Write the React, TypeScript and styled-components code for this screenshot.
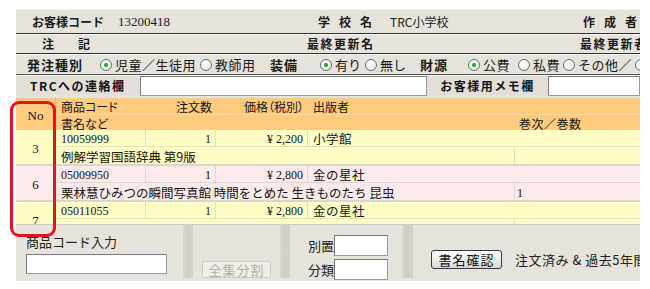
import React from "react";
import styled, { createGlobalStyle } from "styled-components";

const GlobalStyle = createGlobalStyle`
  html, body { margin: 0; padding: 0; background: #ffffff; }
  body { font-family: "Noto Sans CJK JP", "Noto Sans", sans-serif; color: #141414; }
  * { box-sizing: border-box; }
`;

const Page = styled.div`
  position: relative;
  width: 650px;
  height: 289px;
  padding: 9px 10px 0 16px;
`;

const Frame = styled.div`
  width: 624px;
  height: 272px;
  overflow: hidden;
  background: #e6e2dc;
  display: flex;
  flex-direction: column;
`;

const InfoRow = styled.div<{ $h: number; $line?: string; $pl?: number }>`
  display: flex;
  align-items: center;
  flex: none;
  height: ${(p) => p.$h}px;
  padding-left: ${(p) => p.$pl ?? 0}px;
  padding-top: 1px;
  border-bottom: 1px solid ${(p) => p.$line ?? "transparent"};
  box-shadow: inset 0 1px 0 #f7f6f3;
  white-space: nowrap;
`;

const Slot = styled.span<{ $w?: number; $bold?: boolean; $serif?: boolean; $size?: number; $ls?: number }>`
  flex: none;
  display: inline-flex;
  align-items: center;
  width: ${(p) => (p.$w ? `${p.$w}px` : "auto")};
  font-family: ${(p) => (p.$serif ? `"Liberation Serif", "Noto Sans CJK JP", serif` : `"Noto Sans CJK JP", sans-serif`)};
  font-size: ${(p) => p.$size ?? 13}px;
  font-weight: ${(p) => (p.$bold ? 700 : 400)};
  letter-spacing: ${(p) => p.$ls ?? 0}px;
  line-height: 16px;
  white-space: nowrap;
  color: #1a1a1a;
`;

const Radio = styled.span<{ $on?: boolean }>`
  position: relative;
  flex: none;
  width: 12px;
  height: 12px;
  margin-right: 3px;
  border-radius: 50%;
  border: 1px solid #5f7188;
  background: radial-gradient(circle at 40% 35%, #ffffff 0%, #f1f1ec 60%, #d8d8d0 100%);
  &::after {
    content: "";
    position: absolute;
    left: 3px;
    top: 3px;
    width: 4px;
    height: 4px;
    border-radius: 50%;
    background: ${(p) => (p.$on ? "#3d9c3a" : "transparent")};
    box-shadow: ${(p) => (p.$on ? "0 0 1px #5fc65a" : "none")};
  }
`;

const LabelCell = styled.div<{ $w: number; $center?: boolean; $pl?: number }>`
  flex: none;
  width: ${(p) => p.$w}px;
  height: 100%;
  display: flex;
  align-items: center;
  justify-content: ${(p) => (p.$center ? "center" : "flex-start")};
  padding-left: ${(p) => p.$pl ?? 0}px;
  font-size: 12px;
  font-weight: 700;
  letter-spacing: 1.5px;
  background: #e3dfd8;
`;

const TextBox = styled.div<{ $w?: number; $h?: number }>`
  flex: ${(p) => (p.$w ? "none" : "1")};
  width: ${(p) => (p.$w ? `${p.$w}px` : "auto")};
  height: ${(p) => p.$h ?? 20}px;
  background: #ffffff;
  border: 1px solid #9a9a9a;
  border-top-color: #7c7c7c;
  border-left-color: #7c7c7c;
`;

/* ---------- table ---------- */

const TableWrap = styled.div`
  flex: none;
  margin-top: 2px;
  height: 126px;
  overflow: hidden;
  background: #dcd8d0;
`;

const Record = styled.div<{ $bg: string; $sep?: boolean }>`
  display: flex;
  flex: none;
  background: ${(p) => p.$bg};
  border-bottom: ${(p) => (p.$sep ? "2px solid #dad6cd" : "none")};
`;

const NoCell = styled.div`
  flex: none;
  width: 40px;
  display: flex;
  align-items: center;
  justify-content: center;
  padding-top: 3px;
  font-family: "Liberation Serif", serif;
  font-size: 13px;
  line-height: 15px;
  border-right: 1px solid rgba(150, 140, 110, 0.25);
`;

const Body = styled.div`
  flex: 1;
  display: flex;
  flex-direction: column;
`;

const Line = styled.div<{ $cols: string; $h: number; $top?: string }>`
  display: grid;
  flex: none;
  grid-template-columns: ${(p) => p.$cols};
  height: ${(p) => p.$h}px;
  border-top: ${(p) => (p.$top ? `1px solid ${p.$top}` : "none")};
`;

const Cell = styled.div<{ $right?: boolean; $serif?: boolean; $bd?: string; $size?: number; $ls?: number; $pl?: number; $palt?: boolean }>`
  display: flex;
  align-items: center;
  justify-content: ${(p) => (p.$right ? "flex-end" : "flex-start")};
  padding: 2px 4px 0 ${(p) => p.$pl ?? 5}px;
  font-family: ${(p) => (p.$serif ? `"Liberation Serif", "Noto Sans CJK JP", serif` : `"Noto Sans CJK JP", sans-serif`)};
  font-size: ${(p) => p.$size ?? 13}px;
  letter-spacing: ${(p) => p.$ls ?? 0}px;
  font-feature-settings: ${(p) => (p.$palt ? `"palt" 1` : "normal")};
  line-height: 14px;
  white-space: nowrap;
  min-width: 0;
  border-right: ${(p) => (p.$bd ? `1px solid ${p.$bd}` : "none")};
  &:last-child { border-right: none; }
`;

const Highlight = styled.div`
  position: absolute;
  left: 10px;
  top: 101px;
  width: 46px;
  height: 136px;
  border: 3px solid #e3141b;
  border-radius: 9px;
  pointer-events: none;
`;

/* ---------- bottom ---------- */

const Bottom = styled.div`
  flex: none;
  display: flex;
  height: 54px;
  border-top: 1px solid #d2cec6;
  background: #e6e2dc;
`;

const Pane = styled.div<{ $w?: number; $pt?: number; $pl?: number }>`
  flex: ${(p) => (p.$w ? "none" : "1")};
  width: ${(p) => (p.$w ? `${p.$w}px` : "auto")};
  padding-top: ${(p) => p.$pt ?? 0}px;
  padding-left: ${(p) => p.$pl ?? 0}px;
  display: flex;
  flex-direction: column;
  white-space: nowrap;
`;

const Strip = styled.div<{ $w: number }>`
  flex: none;
  width: ${(p) => p.$w}px;
  background: linear-gradient(90deg, #dcd8d1 0%, #d2cec7 40%, #d6d2cb 100%);
`;

const PaneText = styled.div`
  font-size: 13px;
  line-height: 16px;
  color: #222;
`;

const PaneRow = styled.div<{ $mt?: number }>`
  display: flex;
  align-items: center;
  margin-top: ${(p) => p.$mt ?? 0}px;
`;

const SideLabel = styled.div<{ $w: number }>`
  width: ${(p) => p.$w}px;
  text-align: right;
  font-size: 13px;
  line-height: 16px;
  color: #222;
`;

const Button = styled.button<{ $disabled?: boolean; $w: number; $h: number }>`
  width: ${(p) => p.$w}px;
  height: ${(p) => p.$h}px;
  padding: 0;
  font-family: "Noto Sans CJK JP", sans-serif;
  font-size: 13px;
  line-height: 15px;
  letter-spacing: 1px;
  color: ${(p) => (p.$disabled ? "#b4b1ab" : "#111")};
  background: ${(p) => (p.$disabled ? "#efede8" : "linear-gradient(#ffffff, #ecebe6 60%, #d9d7d0)")};
  border: 1px solid ${(p) => (p.$disabled ? "#cfccc5" : "#2f3b4a")};
  border-radius: ${(p) => (p.$disabled ? 2 : 3)}px;
`;

const Note = styled.span`
  margin-left: 13px;
  font-size: 13px;
  line-height: 16px;
  letter-spacing: 0.5px;
  color: #222;
`;

/* ---------- data ---------- */

type Item = {
  no: number;
  code: string;
  qty: string;
  price: string;
  pub: string;
  title: string;
  vol: string;
  pink?: boolean;
};

const items: Item[] = [
  { no: 3, code: "10059999", qty: "1", price: "¥ 2,200", pub: "小学館", title: "例解学習国語辞典 第9版", vol: "" },
  { no: 6, code: "05009950", qty: "1", price: "¥ 2,800", pub: "金の星社", title: "栗林慧ひみつの瞬間写真館 時間をとめた 生きものたち 昆虫", vol: "1", pink: true },
  { no: 7, code: "05011055", qty: "1", price: "¥ 2,800", pub: "金の星社", title: "", vol: "" },
];

const COLS1 = "90px 70px 92px 1fr";
const COLS2 = "459px 1fr";

export default function App() {
  return (
    <>
      <GlobalStyle />
      <Page>
        <Frame>
          <InfoRow $h={25} $line="#333" $pl={16}>
            <Slot $w={86} $bold $size={12}>お客様コード</Slot>
            <Slot $w={200} $serif $size={13}>13200418</Slot>
            <Slot $w={72} $bold $size={12} $ls={9}>学校名</Slot>
            <Slot $w={193} $size={12}>TRC小学校</Slot>
            <Slot $bold $size={12} $ls={9}>作成者</Slot>
          </InfoRow>
          <InfoRow $h={20} $line="#333" $pl={26}>
            <Slot $w={265} $bold $size={12}>注　　記</Slot>
            <Slot $w={273} $bold $size={12} $ls={1.5}>最終更新名</Slot>
            <Slot $bold $size={12} $ls={1.5}>最終更新者</Slot>
          </InfoRow>
          <InfoRow $h={21} $line="#555" $pl={11}>
            <Slot $w={73} $bold $size={13} $ls={1}>発注種別</Slot>
            <Slot $w={100} $ls={0.5}><Radio $on />児童／生徒用</Slot>
            <Slot $w={70} $ls={0.5}><Radio />教師用</Slot>
            <Slot $w={50} $bold $ls={1}>装備</Slot>
            <Slot $w={45}><Radio $on />有り</Slot>
            <Slot $w={55}><Radio />無し</Slot>
            <Slot $w={48} $bold $ls={1}>財源</Slot>
            <Slot $w={50} $ls={0.5}><Radio $on />公費</Slot>
            <Slot $w={45} $ls={0.5}><Radio />私費</Slot>
            <Slot $w={72} $ls={0.5}><Radio />その他／</Slot>
            <Slot><Radio /></Slot>
          </InfoRow>
          <InfoRow $h={21}>
            <LabelCell $w={124} $pl={14}>TRCへの連絡欄</LabelCell>
            <TextBox $w={287} />
            <LabelCell $w={121} $center>お客様用メモ欄</LabelCell>
            <TextBox />
          </InfoRow>

          <TableWrap>
            <Record $bg="#ffcb7e">
              <NoCell>No</NoCell>
              <Body>
                <Line $cols={COLS1} $h={16}>
                  <Cell $size={12} $palt>商品コード</Cell>
                  <Cell $size={12} $right $palt>注文数</Cell>
                  <Cell $size={12} $right $palt>価格（税別）</Cell>
                  <Cell $size={12} $palt>出版者</Cell>
                </Line>
                <Line $cols={COLS2} $h={16} $top="#ffd9a0">
                  <Cell $size={12} $palt>書名など</Cell>
                  <Cell $size={12} $ls={0.5} $pl={4}>巻次／巻数</Cell>
                </Line>
              </Body>
            </Record>
            {items.map((it) => {
              const bd = it.pink ? "#e8d3d3" : "#e3e0bf";
              return (
                <Record key={it.no} $bg={it.pink ? "#fcebeb" : "#ffffc6"} $sep>
                  <NoCell>{it.no}</NoCell>
                  <Body>
                    <Line $cols={COLS1} $h={16}>
                      <Cell $serif $size={12} $bd={bd}>{it.code}</Cell>
                      <Cell $serif $size={12} $right $bd={bd}>{it.qty}</Cell>
                      <Cell $serif $size={12} $right $bd={bd}>{it.price}</Cell>
                      <Cell $size={12.5} $ls={0.5}>{it.pub}</Cell>
                    </Line>
                    <Line $cols={COLS2} $h={18} $top={bd}>
                      <Cell $size={12.5} $bd={bd}>{it.title}</Cell>
                      <Cell $serif $size={12} $pl={2}>{it.vol}</Cell>
                    </Line>
                  </Body>
                </Record>
              );
            })}
          </TableWrap>

          <Bottom>
            <Pane $w={167} $pt={9} $pl={10}>
              <PaneText>商品コード入力</PaneText>
              <PaneRow $mt={4}>
                <TextBox $w={141} $h={20} />
              </PaneRow>
            </Pane>
            <Strip $w={10} />
            <Pane $w={87} $pt={36} $pl={9}>
              <Button $disabled $w={69} $h={17}>全集分割</Button>
            </Pane>
            <Strip $w={10} />
            <Pane $w={112} $pt={10}>
              <PaneRow>
                <SideLabel $w={44}>別置</SideLabel>
                <TextBox $w={54} $h={21} />
              </PaneRow>
              <PaneRow $mt={3}>
                <SideLabel $w={44}>分類</SideLabel>
                <TextBox $w={54} $h={21} />
              </PaneRow>
            </Pane>
            <Strip $w={11} />
            <Pane $pt={25} $pl={18}>
              <PaneRow>
                <Button $w={71} $h={19}>書名確認</Button>
                <Note>注文済み &amp; 過去5年間購入</Note>
              </PaneRow>
            </Pane>
          </Bottom>
        </Frame>
        <Highlight />
      </Page>
    </>
  );
}
